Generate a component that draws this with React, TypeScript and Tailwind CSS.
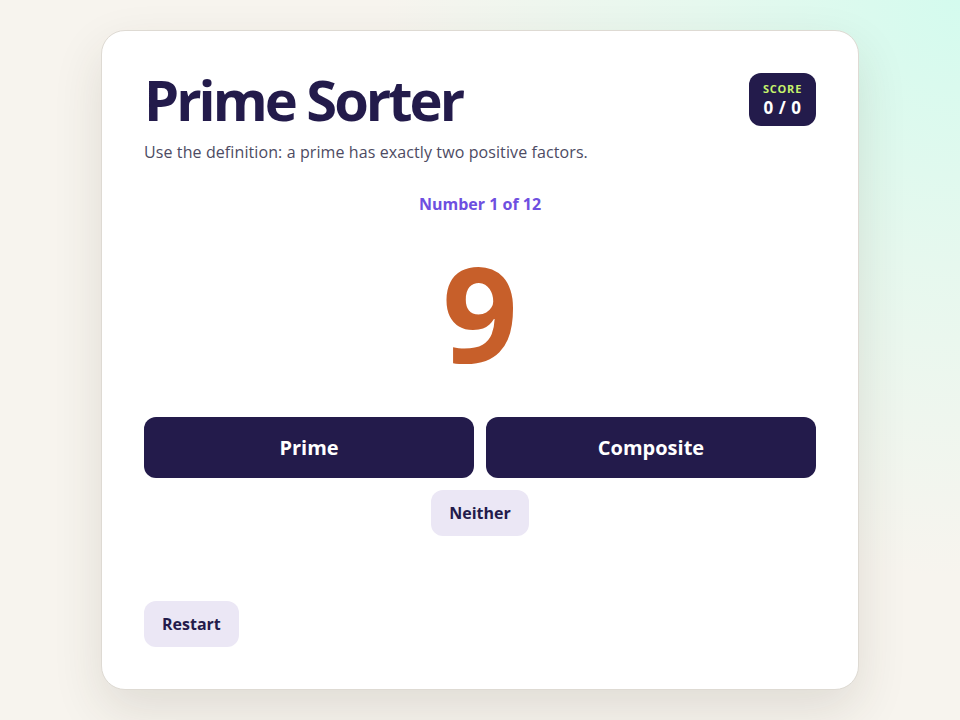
export default function App() {
  return (
    <div
      className="flex min-h-screen items-center justify-center bg-[#f7f4ee] bg-[radial-gradient(circle_at_100%_0%,#d4fbee_0%,#e6f8ee_22%,#f7f4ee_48%)]"
      style={{ fontFamily: '"Open Sans", "Noto Sans", sans-serif' }}
    >
      <div className="flex h-[660px] w-[758px] flex-col rounded-[24px] border border-[#dedad3] bg-white px-[42px] pt-[42px] pb-[42px] shadow-[0_20px_50px_rgba(60,50,30,0.12)]">
        <div className="flex items-start justify-between">
          <h1 className="mt-[-6px] text-[56px] leading-[64px] font-bold tracking-[-3px] text-[#231b4b]">
            Prime Sorter
          </h1>
          <div className="flex h-[53px] w-[67px] flex-col items-center justify-center gap-[2px] rounded-[12px] bg-[#231b4b]">
            <div className="text-[11px] leading-[14px] font-bold tracking-[0.8px] text-[#c6f36b]">SCORE</div>
            <div className="text-[17px] leading-[20px] font-bold tracking-[0.5px] text-white">0 / 0</div>
          </div>
        </div>
        <p className="mt-[10px] text-[16px] leading-[22px] tracking-[0.1px] text-[#4d4b63]">
          Use the definition: a prime has exactly two positive factors.
        </p>
        <div className="mt-[30px] text-center text-[16px] leading-[22px] font-bold text-[#6e4fe0]">
          Number 1 of 12
        </div>
        <div className="mt-[12px] text-center text-[132px] leading-[170px] font-bold text-[#c75f2a]">9</div>
        <div className="mt-[20px] grid grid-cols-2 gap-3">
          <button className="h-[61px] rounded-[12px] bg-[#231b4b] text-[20px] font-bold text-white">Prime</button>
          <button className="h-[61px] rounded-[12px] bg-[#231b4b] text-[20px] font-bold text-white">Composite</button>
        </div>
        <div className="mt-3 flex justify-center">
          <button className="h-[46px] rounded-[12px] bg-[#ebe7f5] px-[18px] text-[16px] font-bold text-[#231b4b]">Neither</button>
        </div>
        <div className="mt-auto">
          <button className="h-[46px] rounded-[12px] bg-[#ebe7f5] px-[18px] text-[16px] font-bold text-[#231b4b]">Restart</button>
        </div>
      </div>
    </div>
  )
}
